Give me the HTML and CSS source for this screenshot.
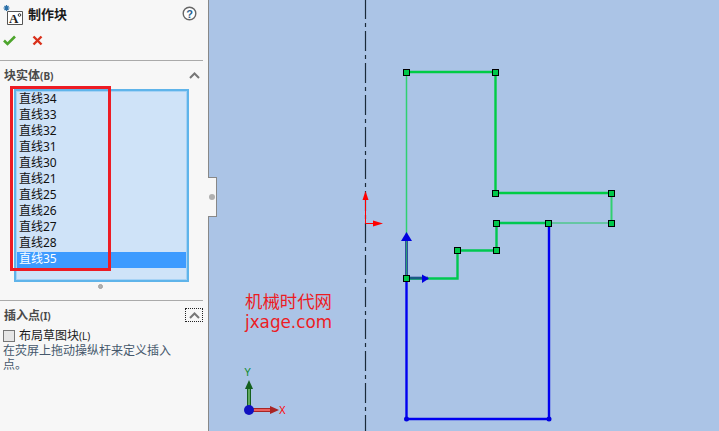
FILE: index.html
```html
<!DOCTYPE html>
<html>
<head>
  <title>制作块</title>
  <link rel="stylesheet" href="styles.css">
</head>
<body>
  <div class="panel">
    <div class="title">
      <svg class="block-icon" width="20" height="20" viewBox="0 0 20 20">
        <path d="M4.5 6.5H19.5V19.5H4.5Z" fill="#fff" stroke="#555" stroke-width="1"/>
        <path d="M3.5 0V6M0.5 3H6.5M1.5 1L5.5 5M5.5 1L1.5 5" stroke="#2a6fa8" stroke-width="1.2"/>
        <text x="6" y="18" class="block-a">A</text>
        <circle cx="16.5" cy="10" r="1.3" fill="none" stroke="#333"/>
      </svg>
      <span class="title-text">制作块</span>
      <svg class="help" width="15" height="15" viewBox="0 0 15 15">
        <circle cx="7.5" cy="7.5" r="6.3" fill="#fff" stroke="#666" stroke-width="1.4"/>
        <text x="7.5" y="11.5" class="help-q">?</text>
      </svg>
    </div>
    <div class="actions">
      <svg width="13" height="11" viewBox="0 0 13 11"><path d="M1 5.5L4.5 9L12 1.5" fill="none" stroke="#4da52c" stroke-width="2.6"/></svg>
      <svg width="11" height="11" viewBox="0 0 11 11"><path d="M1.5 1.5L9.5 9.5M9.5 1.5L1.5 9.5" stroke="#d9301a" stroke-width="2.4"/></svg>
    </div>

    <div class="section-head first">
      <span>块实体<small>(B)</small></span>
      <svg class="chevron" width="11" height="7" viewBox="0 0 11 7"><path d="M1 6L5.5 1.5L10 6" fill="none" stroke="#777" stroke-width="2"/></svg>
    </div>
    <div class="list-wrap">
      <ul class="list">
        <li>直线34</li>
        <li>直线33</li>
        <li>直线32</li>
        <li>直线31</li>
        <li>直线30</li>
        <li>直线21</li>
        <li>直线25</li>
        <li>直线26</li>
        <li>直线27</li>
        <li>直线28</li>
        <li class="selected">直线35</li>
      </ul>
      <div class="red-box"></div>
    </div>
    <div class="grip"></div>

    <div class="section-head insert">
      <span>插入点<small>(I)</small></span>
      <div class="collapse">
        <svg width="11" height="7" viewBox="0 0 11 7"><path d="M1 6L5.5 1.5L10 6" fill="none" stroke="#777" stroke-width="2"/></svg>
      </div>
    </div>
    <label class="check">
      <span class="box"></span>
      <span>布局草图块<small>(L)</small></span>
    </label>
    <p class="hint">在荧屏上拖动操纵杆来定义插入点。</p>
  </div>

  <div class="canvas">
    <div class="handle"><span></span></div>
    <svg class="drawing" width="510" height="431" viewBox="209 0 510 431">
      <!-- centre line -->
      <path class="centre" d="M365.5 0V431"/>

      <!-- origin -->
      <path d="M365.5 198V223.5H376" fill="none" stroke="#f00" stroke-width="1"/>
      <path d="M365.5 191L368.5 200H362.5Z" fill="#f00"/>
      <path d="M383 223.5L373 220.5V226.5Z" fill="#f00"/>

      <!-- sketch -->
      <path d="M406.5 72V278" stroke="#2fd070" stroke-width="1.5"/>
      <path d="M406.5 72H495.5V193H611" fill="none" stroke="#00cc44" stroke-width="2.4"/>
      <path d="M611.5 193V223" stroke="#30d070" stroke-width="2"/>
      <path d="M549 223H611" stroke="#20c860" stroke-width="1"/>
      <path d="M549 223H496.5V250.5H457.5V278.5H406" fill="none" stroke="#00c850" stroke-width="2.4"/>
      <path d="M406.5 278V419H549V223" fill="none" stroke="#0000f0" stroke-width="2.4"/>
      <path d="M406.5 238V278H428" fill="none" stroke="#0a1a90" stroke-width="2.4"/>
      <path d="M406.5 232V278H430" fill="none" stroke="#2fc070" stroke-width="0.8"/>
      <path d="M406.5 232L412 241H401Z" fill="#0000e0"/>
      <path d="M429 278.5L422 274.5V283Z" fill="#0000e0"/>

      <g class="pts">
        <rect x="403.5" y="69.5" width="6" height="6"/>
        <rect x="492.5" y="69.5" width="6" height="6"/>
        <rect x="492.5" y="190.5" width="6" height="6"/>
        <rect x="608.5" y="190.5" width="6" height="6"/>
        <rect x="608.5" y="220.5" width="6" height="6"/>
        <rect x="545.5" y="220.5" width="6" height="6"/>
        <rect x="493.5" y="220.5" width="6" height="6"/>
        <rect x="493.5" y="247.5" width="6" height="6"/>
        <rect x="454.5" y="247.5" width="6" height="6"/>
        <rect x="403.5" y="275.5" width="6" height="6"/>
      </g>
      <circle cx="406.5" cy="419" r="2.5" fill="#0000e0"/>
      <circle cx="549" cy="419" r="2.5" fill="#0000e0"/>

      <!-- triad -->
      <path d="M249 385V408" stroke="#14601e" stroke-width="4"/>
      <path d="M249 385V408" stroke="#5fa85f" stroke-width="2"/>
      <path d="M249 380L253 389H245Z" fill="#14601e"/>
      <path d="M250 410H272" stroke="#a82424" stroke-width="4"/>
      <path d="M250 410H272" stroke="#e86060" stroke-width="2"/>
      <path d="M279 410L270 406V414Z" fill="#a82424"/>
      <circle cx="249" cy="410" r="5" fill="#1010c0"/>
      <text x="247.5" y="376" class="axis y">Y</text>
      <text x="279" y="414" class="axis x">X</text>
    </svg>
    <div class="stamp">
      <div class="stamp-cn">机械时代网</div>
      <div>jxage.com</div>
    </div>
  </div>
</body>
</html>
```

FILE: styles.css
```css
html, body {
    margin: 0;
    height: 431px;
    overflow: hidden;
}

body {
    display: flex;
    font: 12px "Noto Sans", "Noto Sans CJK SC", sans-serif;
    color: #1a1a1a;
}

small {
    font-size: 10px;
}

.panel {
    width: 208px;
    height: 431px;
    box-sizing: border-box;
    background: #f7f7f7;
    flex: none;
}

.title {
    display: flex;
    align-items: center;
    height: 26px;
    padding: 0 11px 0 3px;
}

.block-icon {
    margin-top: 4px;
}

.block-a {
    font: bold 13px "Liberation Serif", serif;
    fill: #222;
}

.title-text {
    margin-left: 5px;
    font-weight: bold;
    font-size: 13px;
    flex: 1;
}

.help-q {
    font: bold 11px "Liberation Sans", sans-serif;
    fill: #2a5f8f;
    text-anchor: middle;
}

.actions {
    display: flex;
    align-items: center;
    gap: 16px;
    height: 35px;
    width: 203px;
    padding: 0 0 6px 3px;
    box-sizing: border-box;
    border-bottom: 1px solid #aaa;
}

.section-head {
    display: flex;
    align-items: center;
    justify-content: space-between;
    width: 203px;
    padding: 0 3px 0 4px;
    box-sizing: border-box;
    font-weight: bold;
    color: #4a4a4a;
}

.section-head.first {
    height: 28px;
}

.list-wrap {
    position: relative;
    margin-left: 14px;
    width: 175px;
    height: 193px;
}

.list {
    list-style: none;
    margin: 0;
    padding: 1px 0 0;
    height: 193px;
    box-sizing: border-box;
    border: 2px solid #5fb4ea;
    box-shadow: inset 0 0 0 1px #a6d2f5;
    background: #cfe3f8;
}

.list li {
    height: 16px;
    line-height: 14px;
    padding-left: 2px;
    margin: 0 1px;
    color: #111;
}

.list li.selected {
    background: #3d9bff;
    color: #fff;
}

.red-box {
    position: absolute;
    left: -4px;
    top: -3px;
    width: 95px;
    height: 179px;
    border: 3px solid #ed1c24;
}

.grip {
    width: 5px;
    height: 5px;
    margin: 2px 0 0 98px;
    background: #b0b0b0;
    border: 1px solid #a0a0a0;
    border-radius: 50%;
    box-sizing: border-box;
}

.insert {
    margin-top: 11px;
    height: 29px;
    border-top: 1px solid #aaa;
}

.collapse {
    width: 18px;
    height: 14px;
    margin-right: -3px;
    display: flex;
    align-items: center;
    justify-content: center;
    border: 1px dotted #222;
    box-sizing: border-box;
}

.check {
    display: flex;
    align-items: center;
    gap: 4px;
    height: 14px;
    line-height: 14px;
    margin-left: 3px;
}

.box {
    width: 12px;
    height: 12px;
    box-sizing: border-box;
    border: 1px solid #777;
    background: #e6e6e6;
}

.hint {
    margin: 1px 0 0 3px;
    width: 170px;
    line-height: 14px;
    color: #45586c;
}

.canvas {
    position: relative;
    flex: 1;
    height: 431px;
    background: #abc4e6;
    border-left: 1px solid #888;
}

.drawing {
    display: block;
}

.centre {
    stroke: #1a2a3a;
    stroke-width: 1.2;
    stroke-dasharray: 20 4 4 4;
    stroke-dashoffset: 1;
}

.handle {
    position: absolute;
    left: -1px;
    top: 177px;
    width: 8px;
    height: 38px;
    background: #f7f7f7;
    border: 1px solid #888;
    border-left: none;
    display: flex;
    align-items: center;
    justify-content: center;
}

.handle span {
    width: 6px;
    height: 6px;
    border-radius: 50%;
    background: #b0b0b0;
}

.pts rect {
    fill: #00c84a;
    stroke: #000;
    stroke-width: 1;
}

.axis {
    font: 10px "Liberation Sans", sans-serif;
}

.axis.y {
    fill: #0a8a2a;
    text-anchor: middle;
}

.axis.x {
    fill: #f00;
}

.stamp {
    position: absolute;
    left: 36px;
    top: 292px;
    color: #ec1c24;
    font: 16.8px/20px "DejaVu Sans", "Noto Sans CJK SC", sans-serif;
}

.stamp-cn {
    font-size: 17.4px;
}
```
